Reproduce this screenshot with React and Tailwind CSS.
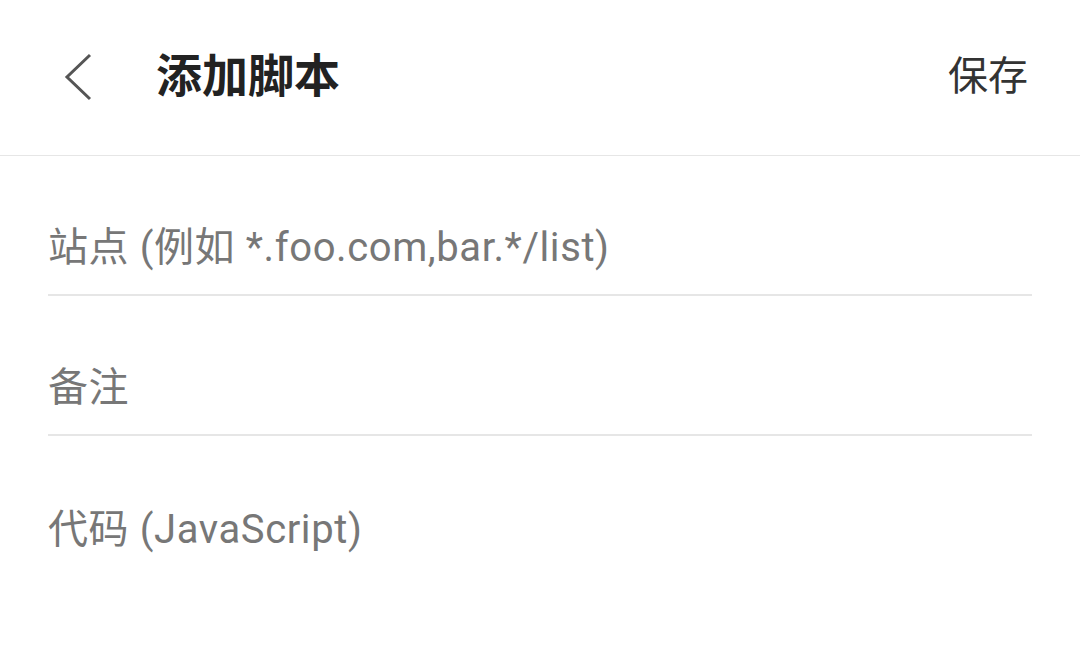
import React from "react";

const font = { fontFamily: "Roboto, 'Noto Sans CJK SC', sans-serif" };

const Field = ({ label, line = true }) => (
  <div className={`h-[140px] flex items-end pb-[24px] ${line ? "border-b-2 border-[#e6e6e6]" : ""}`}>
    <span className="text-[40px] leading-[44px] tracking-[0.6px] text-[#777]">{label}</span>
  </div>
);

export default function App() {
  return (
    <div className="w-[1080px] h-[669px] bg-white overflow-hidden" style={font}>
      <div className="h-[156px] flex items-center border-b border-[#e6e6e6] pl-[64px] pr-[52px]">
        <svg width="30" height="50" viewBox="0 0 30 50" className="-mt-[2px]">
          <path d="M26 3 L3 25 L26 47" fill="none" stroke="#555" strokeWidth="3" />
        </svg>
        <h1 className="ml-[62px] text-[46px] font-bold text-[#222] -mt-[2px]">添加脚本</h1>
        <button className="ml-auto text-[40px] text-[#333] -mt-[2px]">保存</button>
      </div>
      <div className="mx-[48px]">
        <Field label="站点 (例如 *.foo.com,bar.*/list)" />
        <Field label="备注" />
        <Field label="代码 (JavaScript)" line={false} />
      </div>
    </div>
  );
}
